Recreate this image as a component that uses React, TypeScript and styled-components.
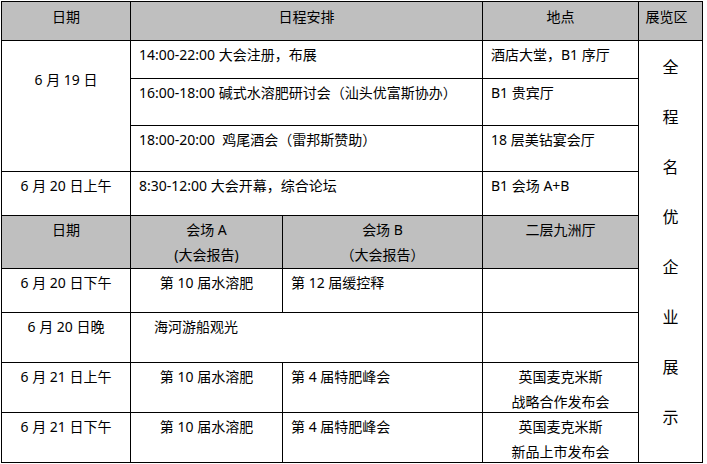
import * as React from 'react';
import styled, {createGlobalStyle} from 'styled-components';

const GlobalStyle = createGlobalStyle`
  html, body {
    margin: 0;
    padding: 0;
    background: #fff;
  }
  body {
    font-family: "Noto Sans", "Noto Sans CJK SC", sans-serif;
    color: #000;
  }
`;

const Table = styled.div`
  display: grid;
  grid-template-columns: 128px 151px 199px 155px 63px;
  grid-template-rows: 38px 37px 46px 45px 43px 52px 43px 49px 49px 49px;
  gap: 1px;
  padding: 1px;
  margin: 1px 0 0 1px;
  width: max-content;
  background: #000;
`;

type CellProps = {
  $col: string;
  $row: string;
  $head?: boolean;
  $center?: boolean;
  $top?: number;
  $indent?: number;
};

const Cell = styled.div<CellProps>`
  grid-column: ${p => p.$col};
  grid-row: ${p => p.$row};
  background: ${p => (p.$head ? '#bfbfbf' : '#fff')};
  padding: ${p => p.$top ?? 1}px 8px 0 ${p => p.$indent ?? 8}px;
  text-align: ${p => (p.$center ? 'center' : 'left')};
  font-size: 14px;
  line-height: 25px;
  white-space: nowrap;
  overflow: hidden;
`;

const Line = styled.div`
  display: block;
`;

const Side = styled.div`
  grid-column: 5;
  grid-row: 2 / 11;
  background: #fff;
  padding-top: 1px;
  display: flex;
  flex-direction: column;
  align-items: center;
  font-size: 16px;
`;

const SideChar = styled.span`
  height: 50px;
  line-height: 50px;
`;

const sideText = '全程名优企业展示'.split('');

export default function App() {
  return (
    <>
      <GlobalStyle />
      <Table>
        <Cell $col="1" $row="1" $head $center $top={2}>日期</Cell>
        <Cell $col="2 / 4" $row="1" $head $center $top={2}>日程安排</Cell>
        <Cell $col="4" $row="1" $head $center $top={2}>地点</Cell>
        <Cell $col="5" $row="1" $head $center $top={2} $indent={0}>展览区</Cell>

        <Cell $col="1" $row="2 / 5" $center $top={26}>6 月 19 日</Cell>
        <Cell $col="2 / 4" $row="2">14:00-22:00 大会注册，布展</Cell>
        <Cell $col="4" $row="2">酒店大堂，B1 序厅</Cell>
        <Cell $col="2 / 4" $row="3">16:00-18:00 碱式水溶肥研讨会（汕头优富斯协办）</Cell>
        <Cell $col="4" $row="3">B1 贵宾厅</Cell>
        <Cell $col="2 / 4" $row="4">18:00-20:00&nbsp; 鸡尾酒会（雷邦斯赞助）</Cell>
        <Cell $col="4" $row="4">18 层美钻宴会厅</Cell>

        <Cell $col="1" $row="5" $center>6 月 20 日上午</Cell>
        <Cell $col="2 / 4" $row="5">8:30-12:00 大会开幕，综合论坛</Cell>
        <Cell $col="4" $row="5">B1 会场 A+B</Cell>

        <Cell $col="1" $row="6" $head $center>日期</Cell>
        <Cell $col="2" $row="6" $head $center>
          <Line>会场 A</Line>
          <Line>(大会报告)</Line>
        </Cell>
        <Cell $col="3" $row="6" $head $center>
          <Line>会场 B</Line>
          <Line>（大会报告）</Line>
        </Cell>
        <Cell $col="4" $row="6" $head $center>二层九洲厅</Cell>

        <Cell $col="1" $row="7" $center>6 月 20 日下午</Cell>
        <Cell $col="2" $row="7" $center>第 10 届水溶肥</Cell>
        <Cell $col="3" $row="7">第 12 届缓控释</Cell>
        <Cell $col="4" $row="7" />

        <Cell $col="1" $row="8" $center>6 月 20 日晚</Cell>
        <Cell $col="2 / 4" $row="8" $indent={23}>海河游船观光</Cell>
        <Cell $col="4" $row="8" />

        <Cell $col="1" $row="9" $center>6 月 21 日上午</Cell>
        <Cell $col="2" $row="9" $center>第 10 届水溶肥</Cell>
        <Cell $col="3" $row="9">第 4 届特肥峰会</Cell>
        <Cell $col="4" $row="9" $center>
          <Line>英国麦克米斯</Line>
          <Line>战略合作发布会</Line>
        </Cell>

        <Cell $col="1" $row="10" $center>6 月 21 日下午</Cell>
        <Cell $col="2" $row="10" $center>第 10 届水溶肥</Cell>
        <Cell $col="3" $row="10">第 4 届特肥峰会</Cell>
        <Cell $col="4" $row="10" $center>
          <Line>英国麦克米斯</Line>
          <Line>新品上市发布会</Line>
        </Cell>

        <Side>
          {sideText.map((ch, i) => (
            <SideChar key={i}>{ch}</SideChar>
          ))}
        </Side>
      </Table>
    </>
  );
}
